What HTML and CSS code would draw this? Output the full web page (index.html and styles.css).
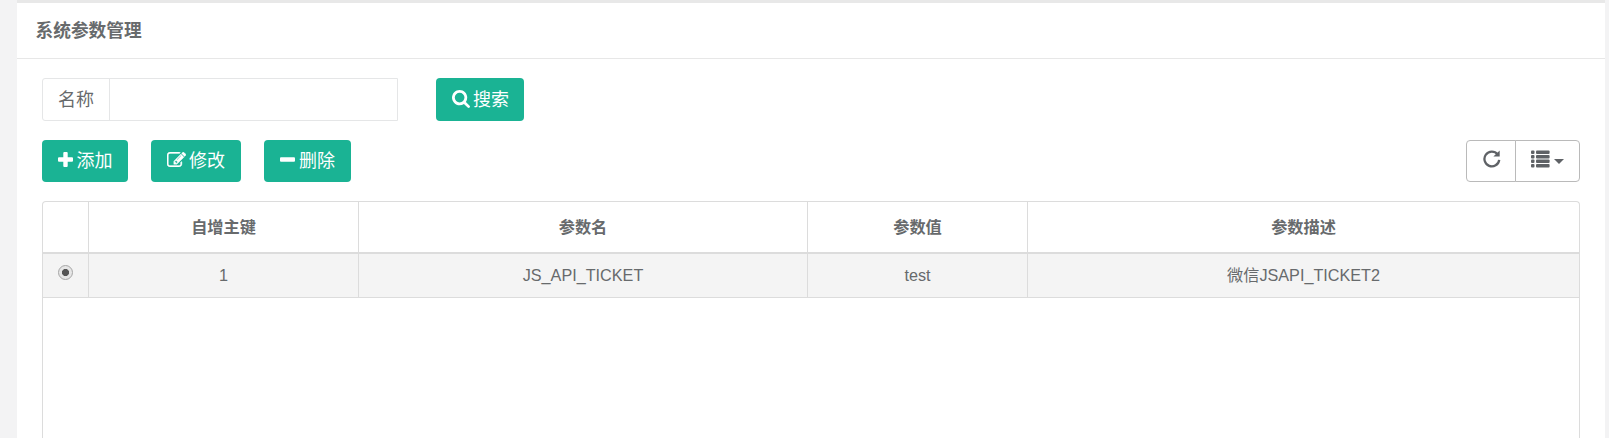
FILE: index.html
```html
<!DOCTYPE html>
<html lang="zh-CN">
<head>
<meta charset="utf-8">
<title>系统参数管理</title>
<link rel="stylesheet" href="styles.css">
</head>
<body>
<main class="panel">
  <header class="panel-title"><h1>系统参数管理</h1></header>
  <div class="panel-content">
    <form class="search">
      <label class="field"><span class="field-label">名称</span><input class="field-input" type="text"></label>
      <button class="btn btn-search" type="button"><svg class="icon search-icon" viewBox="64 128 1664 1664"><path d="M1216 832q0-185-131.500-316.500t-316.500-131.500-316.500 131.500-131.500 316.500 131.500 316.500 316.500 131.500 316.500-131.500 131.500-316.500zm512 832q0 52-38 90t-90 38q-54 0-90-38l-343-342q-179 124-399 124-143 0-273.500-55.500t-225-150-150-225-55.500-273.500 55.500-273.500 150-225 225-150 273.500-55.500 273.500 55.500 225 150 150 225 55.500 273.500q0 220-124 399l343 343q37 37 37 90z"/></svg><span>搜索</span></button>
    </form>
    <div class="toolbar">
      <button class="btn btn-add" type="button"><svg class="icon add-icon" viewBox="0 0 15 15"><path d="M6.300 0h2.400q1 0 1 1v4.300H14q1 0 1 1v2.400q0 1-1 1H9.700V14q0 1-1 1H6.300q-1 0-1-1V9.700H1q-1 0-1-1V6.300q0-1 1-1h4.300V1q0-1 1-1z"/></svg><span>添加</span></button>
      <button class="btn btn-edit" type="button"><svg class="icon edit-icon" viewBox="0 128 1792 1408"><path d="M888 1184l116-116-152-152-116 116v56h96v96h56zm440-720q-16-16-33 1l-350 350q-17 17-1 33t33-1l350-350q17-17 1-33zm80 594v190q0 119-84.500 203.500t-203.500 84.500h-832q-119 0-203.500-84.500t-84.500-203.500v-832q0-119 84.500-203.500t203.500-84.500h832q63 0 117 25 15 7 18 23 3 17-9 29l-49 49q-14 14-32 8-23-6-45-6h-832q-66 0-113 47t-47 113v832q0 66 47 113t113 47h832q66 0 113-47t47-113v-126q0-13 9-22l64-64q15-15 35-7t20 29zm-96-738l288 288-672 672h-288v-288zm444 132l-92 92-288-288 92-92q28-28 68-28t68 28l152 152q28 28 28 68t-28 68z"/></svg><span>修改</span></button>
      <button class="btn btn-delete" type="button"><svg class="icon add-icon" viewBox="0 0 15 15"><rect y="5.300" width="15" height="4.400" rx="1"/></svg><span>删除</span></button>
      <div class="tools">
        <button class="tool tool-refresh" type="button" aria-label="刷新"><svg class="icon refresh-icon" viewBox="0 0 18 18"><path d="M14.600 4.300A7.400 7.400 0 1 0 16.200 9.800" fill="none" stroke="currentColor" stroke-width="2.300"/><path d="M16.700.6V6.500H10.400z"/></svg></button>
        <button class="tool tool-columns" type="button" aria-label="列"><svg class="icon list-icon" viewBox="0 0 19 18"><rect y=".5" width="3.500" height="3.500" rx="1"/><rect x="5" y=".5" width="13.600" height="3.500" rx="1"/><rect y="5" width="3.500" height="3.500" rx="1"/><rect x="5" y="5" width="13.600" height="3.500" rx="1"/><rect y="9.500" width="3.500" height="3.500" rx="1"/><rect x="5" y="9.500" width="13.600" height="3.500" rx="1"/><rect y="14" width="3.500" height="3.500" rx="1"/><rect x="5" y="14" width="13.600" height="3.500" rx="1"/></svg><span class="caret"></span></button>
      </div>
    </div>
    <div class="table-box">
      <table class="params">
        <colgroup><col class="col-check"><col class="col-id"><col class="col-name"><col class="col-value"><col></colgroup>
        <thead><tr><th></th><th>自增主键</th><th>参数名</th><th>参数值</th><th>参数描述</th></tr></thead>
        <tbody><tr><td><span class="radio" role="radio" aria-checked="true"></span></td><td>1</td><td>JS_API_TICKET</td><td>test</td><td>微信JSAPI_TICKET2</td></tr></tbody>
      </table>
    </div>
  </div>
</main>
</body>
</html>
```

FILE: styles.css
```css
* { box-sizing: border-box; }
body {
  margin: 0;
  height: 438px;
  overflow: hidden;
  padding: 0 4px 0 17px;
  background: #f3f3f4;
  color: #676a6c;
  font-family: "Liberation Sans", "Noto Sans CJK SC", sans-serif;
  font-size: 16.200px;
}
.panel {
  display: flex;
  flex-direction: column;
  height: 438px;
  background: #fff;
  border-top: 3px solid #e8e8e8;
}
.panel-title {
  display: flex;
  align-items: center;
  height: 56px;
  padding: 0 18.500px;
  border-bottom: 1px solid #e7e7e7;
}
.panel-title h1 {
  margin: 0;
  font-size: 17.700px;
  line-height: 24px;
  font-weight: 700;
}
.panel-content {
  flex: 1;
  display: flex;
  flex-direction: column;
  min-height: 0;
  padding: 19px 25px 0;
}
.search { display: flex; gap: 38px; height: 43px; margin: 0 0 19px; }
.field {
  display: flex;
  width: 356px;
  border: 1px solid #e5e6e7;
  border-radius: 3px 0 0 3px;
}
.field-label {
  display: flex;
  align-items: center;
  width: 67px;
  padding: 0 0 3px 15px;
  border-right: 1px solid #e5e6e7;
  font-size: 18px;
}
.field-input { flex: 1; min-width: 0; border: 0; background: none; outline: 0; }
.btn {
  display: flex;
  align-items: center;
  gap: 3.500px;
  height: 42px;
  padding: 0 0 4px 16px;
  border: 0;
  border-radius: 4px;
  background: #1ab394;
  color: #fff;
  font: 18px "Liberation Sans", "Noto Sans CJK SC", sans-serif;
  white-space: nowrap;
}
.icon { display: block; flex: none; fill: currentColor; }
.btn-search { width: 88px; height: 43px; gap: 3px; padding-bottom: 3px; }
.btn-add { width: 86px; }
.btn-edit { width: 90px; gap: 3px; }
.btn-delete { width: 87px; gap: 4px; }
.search-icon { width: 18px; height: 18px; margin-top: 2px; }
.add-icon { width: 15px; height: 15px; }
.edit-icon { width: 19px; height: 15px; stroke: currentColor; stroke-width: 35; }
.toolbar { display: flex; gap: 23px; height: 42px; margin-bottom: 19px; }
.tools { display: flex; width: 114px; margin-left: auto; }
.tool {
  display: flex;
  align-items: center;
  height: 42px;
  padding: 0 0 5px 16px;
  border: 1px solid #bababa;
  background: #fff;
  color: #5f6266;
}
.tool-refresh { width: 50px; border-radius: 4px 0 0 4px; }
.tool-columns { width: 65px; gap: 4px; margin-left: -1px; padding-left: 15px; border-radius: 0 4px 4px 0; }
.refresh-icon { width: 18px; height: 18px; }
.list-icon { width: 19px; height: 18px; }
.caret {
  margin-top: 5px;
  border: 5px solid transparent;
  border-top-color: currentColor;
  border-bottom: 0;
}
.table-box {
  flex: 1;
  border: 1px solid #dcdcdc;
  border-bottom: 0;
  border-radius: 4px 4px 0 0;
}
.params {
  width: 100%;
  table-layout: fixed;
  border-collapse: separate;
  border-spacing: 0;
  text-align: center;
  line-height: 22px;
}
.params th, .params td { border-right: 1px solid #dcdcdc; }
.params th:last-child, .params td:last-child { border-right: 0; }
.params th { height: 52px; padding: 0 8px; border-bottom: 2px solid #dcdcdc; font-weight: 700; }
.params td { height: 44px; padding: 0 8px 2px; border-bottom: 1px solid #dcdcdc; background: #f4f4f4; }
.col-check { width: 46px; }
.col-id { width: 270px; }
.col-name { width: 449px; }
.col-value { width: 220px; }
.radio {
  display: block;
  width: 15px;
  height: 15px;
  margin: -5px auto 0;
  border: 1px solid #a6a6a6;
  border-radius: 50%;
  background: radial-gradient(circle, #555 0 3.200px, #e6e6e6 3.900px);
}
```
